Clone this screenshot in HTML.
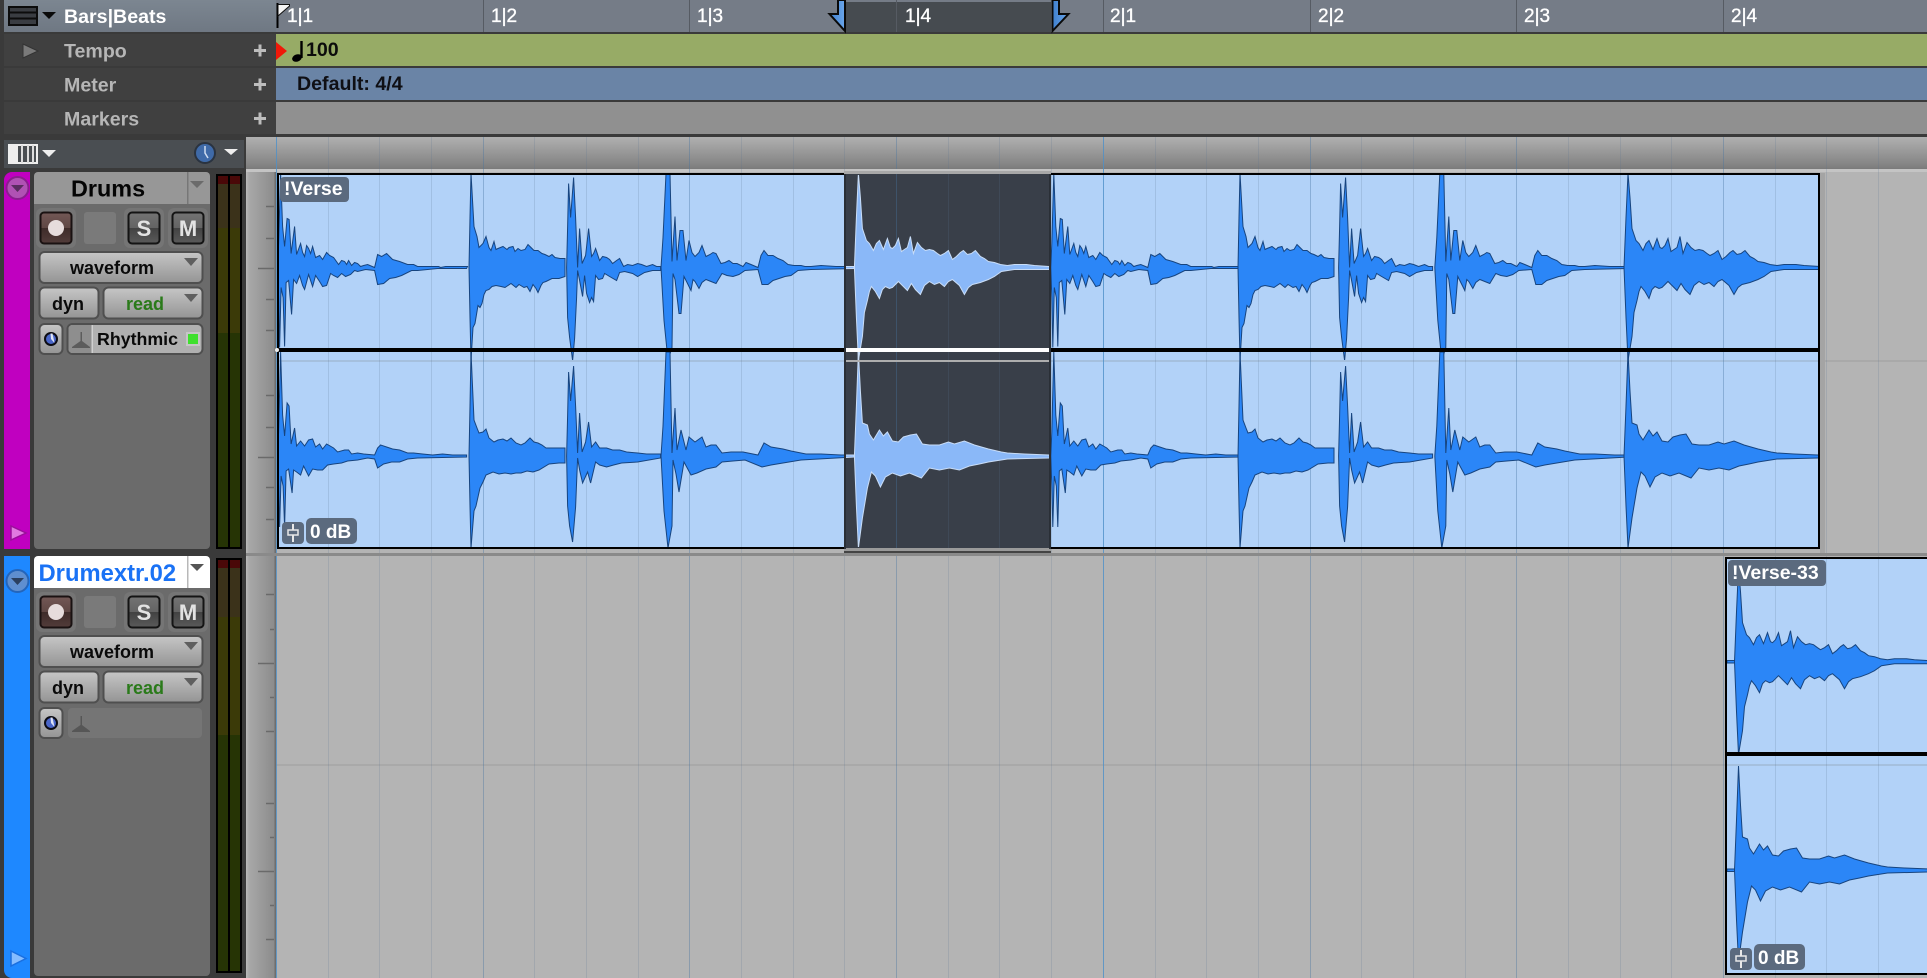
<!DOCTYPE html>
<html><head><meta charset="utf-8"><title>Bars|Beats</title>
<style>
html,body{margin:0;padding:0;background:#3a3a3a;width:1927px;height:978px;overflow:hidden}
svg{display:block;position:absolute;left:0;top:0}
text{font-family:"Liberation Sans",sans-serif;font-weight:bold}
.w{fill:#2b86f7;stroke:#17447e;stroke-width:1}
.s{fill:#8ab8f8;stroke:#c9ddf7;stroke-width:1}
</style></head><body>
<svg width="1927" height="978" viewBox="0 0 1927 978" xmlns="http://www.w3.org/2000/svg">
<defs>
<linearGradient id="gStrip" x1="0" y1="0" x2="0" y2="1"><stop offset="0" stop-color="#b0b0b0"/><stop offset=".85" stop-color="#858585"/><stop offset="1" stop-color="#7a7a7a"/></linearGradient>
<linearGradient id="gVR" x1="0" y1="0" x2="1" y2="0"><stop offset="0" stop-color="#bababa"/><stop offset=".1" stop-color="#a8a8a8"/><stop offset="1" stop-color="#8a8a8a"/></linearGradient>
<linearGradient id="gHead" x1="0" y1="0" x2="0" y2="1"><stop offset="0" stop-color="#7c8691"/><stop offset="1" stop-color="#6f7883"/></linearGradient>
<linearGradient id="gBtn" x1="0" y1="0" x2="0" y2="1"><stop offset="0" stop-color="#c6c6c6"/><stop offset="1" stop-color="#949494"/></linearGradient>
<linearGradient id="gRec" x1="0" y1="0" x2="0" y2="1"><stop offset="0" stop-color="#735856"/><stop offset=".5" stop-color="#5f4744"/><stop offset=".5" stop-color="#3e2b29"/><stop offset="1" stop-color="#523c3a"/></linearGradient>
<linearGradient id="gSM" x1="0" y1="0" x2="0" y2="1"><stop offset="0" stop-color="#737373"/><stop offset=".5" stop-color="#646464"/><stop offset=".5" stop-color="#424242"/><stop offset="1" stop-color="#5a5a5a"/></linearGradient>
<linearGradient id="gFlag" x1="0" y1="0" x2="1" y2="0"><stop offset="0" stop-color="#3f80cf"/><stop offset="1" stop-color="#6ba6ea"/></linearGradient>

<clipPath id="c1"><path d="M279 175H845V360H279zM1050 175H1818V360H1050z"/></clipPath>
<clipPath id="c2"><path d="M279 352H845V547H279zM1050 352H1818V547H1050z"/></clipPath>
<clipPath id="s1"><rect x="846" y="175" width="203" height="185"/></clipPath>
<clipPath id="s2"><rect x="846" y="352" width="203" height="195"/></clipPath>
<clipPath id="t1"><rect x="1727" y="559" width="200" height="205"/></clipPath>
<clipPath id="t2"><rect x="1727" y="756" width="200" height="217"/></clipPath>

<path id="a1" d="M0 0L1 -24 3 -94 5 -41 7 -21 9.5 -49 11.5 -48 13.5 -14 17 -41 19 -13 23 -24 25 -15 27 -11 29 -22 31 -19 33 -14 35 -21 38 -10 42 -12 45 -8 49 -15 52 -12 56 -10 61 -3 64 -7 67 -6 69 -3 71 -7 74 -2 77 -5 80 -4 83 -1 86 -2 90 -3 97 0 100 -13 104 -11 109 -14 115 -8 122 -6 130 -3 136 -3 140 -1 161 -1 163 0 168 -1 190 -1V0M0 0L1 30 2 80 3.5 20 5.5 30 7 79 8.5 15 11 13 14 47 16 12 19 16 22 8 25 18 27 22 31 7 35 19 38 8 42 14 45 19 49 18 53 6 56 8 60 10 64 6 68 9 73 7 77 3 80 4 88 2 97 3 100 17 106 16 112 11 118 10 124 8 128 6 134 3 140 3 160 1 189 1V0"/>
<path id="b1" d="M0 0L1 -50 2 -94 5 -41 8 -31 10 -20 14 -24 17 -31 20 -20 22 -17 25 -26 27 -18 29 -19 34 -21 38 -18 40 -20 44 -21 46 -16 49 -19 52 -17 56 -18 59 -23 62 -20 65 -17 69 -17 73 -14 76 -13 80 -11 83 -13 86 -10 91 -9 96 -9V0M0 0L1 50 2 93 4 60 6 56 9 38 11 40 13 36 15 27 17 23 20 22 23 19 27 18 32 19 36 20 42 16 47 20 50 17 55 20 58 19 61 24 64 17 67 21 69 25 72 18 74 15 77 14 83 11 90 11 96 9V0"/>
<path id="c1w" d="M0 0L1 -40 2 -84 4 -50 7 -90 9 -50 11 0 13 -39 15.500 -4 19 -12 22 -39 25 -11 27 -14 29 -19 33 -7 36 -11 40 -10 43 -8 46 -4 50 -7 53 -9 55 -5 57 -1 61 -3 66 -2 71 -4 75 -3 80 -1 86 -3 90 -1 94 -1V0M0 0L1 50 3 70 6 93 8 71 10 30 11 3 13 13 16 29 18 8 20 26 23 35 25 30 27 34 29 8 32 12 36 11 38 6 43 9 50 13 53 5 58 4 66 6 71 9 78 5 86 3 94 3V0"/>
<path id="d1" d="M0 0L2 -30 5 -94 9 -94 11 -6 14 -51 16 -7 19 -37 22 -37 25 -7 28 -27 31 -15 34 -11 38 -15 41 -22 45 -11 49 -13 52 -15 55 -14 60 -4 64 -5 68 -7 72 -4 76 -4 82 -1 85 -5 90 -3 97 0 100 -12 103 -17 107 -12 112 -12 117 -9 122 -7 127 -3 133 -2 140 -2 144 -1 150 -1 160 -2 175 -1 193 -1V0M0 0L3 53 7 93 11 80 12 6 14 12 18 46 20 46 23 9 26 15 30 23 32 12 34 14 38 21 41 15 45 12 50 14 55 16 61 6 66 8 72 9 78 7 84 3 97 2 101 17 107 17 112 13 118 11 124 9 130 8 137 3 150 2 193 1V0"/>
<path id="e1" d="M0 0L2 -50 4 -94 6 -70 8 -39 10 -33 12 -27 15 -24 19 -17 22 -24 25 -27 29 -18 33 -29 36 -20 38 -19 41 -22 44 -29 47 -16 50 -18 53 -20 56 -31 59 -14 63 -25 67 -20 71 -17 75 -18 79 -17 83 -14 86 -12 90 -14 94 -17 98 -8 102 -11 106 -15 109 -17 113 -13 117 -14 121 -17 126 -11 130 -9 134 -6 140 -5 146 -3 153 -2 160 -3 172 -3 180 -2 195 -1V0M0 0L2 50 4 93 8 69 10 45 13 33 15 24 17 19 21 24 25 31 28 22 31 19 35 21 38 20 41 17 44 14 48 18 53 23 57 16 61 22 66 27 70 18 75 14 80 17 85 15 90 19 94 14 98 12 105 18 110 27 114 20 118 17 126 15 134 12 140 9 147 4 160 2 195 2V0"/>

<path id="a2" d="M0 0L1 -24 3 -104 5 -41 7 -20 9.500 -53 11.500 -50 13.500 -12 17 -28 19 -10 23 -15 27 -10 31 -16 35 -17 38 -9 42 -12 45 -7 49 -12 56 -8 60 -4 67 -6 71 -6 74 -2 80 -3 86 -2 97 -1 100 -8 103 -11 109 -9 115 -7 122 -6 130 -3 136 -3 145 -2 155 -1 165 -2 175 -1 189 -1V0M0 0L1 30 2 71 3.500 20 5.500 30 7 71 8.500 15 11 13 14.500 37 16 14 19 16 23 19 26 10 31 20 35 13 40 14 45 14 50 9 56 8 64 7 70 5 80 4 90 2 97 3 100 12 106 8 114 6 122 6 130 3 140 2 189 1V0"/>
<path id="b2" d="M0 0L1 -50 2 -104 5 -36 8 -28 10 -23 14 -24 17 -27 20 -18 25 -14 29 -16 34 -17 38 -15 42 -18 47 -13 52 -11 56 -13 61 -18 65 -14 69 -13 73 -11 77 -8 85 -8 96 -8V0M0 0L1 50 2 92 5 55 7 50 11 32 14 26 17 19 24 16 30 18 36 17 42 18 47 17 52 17 58 15 64 16 70 14 80 8 90 7 96 7V0"/>
<path id="c2w" d="M0 0L1 -40 2 -84 4 -55 7 -90 9 -50 11 -3 13 -43 15.500 -4 19 -14 22 -34 25 -9 29 -14 33 -8 37 -8 40 -8 46 -6 53 -6 60 -4 71 -3 80 -2 94 -2V0M0 0L1 50 3 70 6 86 9 51 11 2 13 14 16 27 21 16 24 27 29 6 33 9 40 11 47 9 55 7 71 6 94 2V0"/>
<path id="d2" d="M0 0L2 -30 5 -104 9 -104 11 -3 14 -48 16 -6 20 -26 25 -6 28 -19 34 -14 41 -19 45 -9 50 -11 55 -11 61 -3 70 -4 82 -4 97 -1 103 -13 110 -9 122 -7 130 -5 145 -2 160 -2 180 -1 193 -1V0M0 0L3 55 7 92 11 70 12 4 15 18 18 36 23 6 30 19 36 17 45 13 55 11 61 6 72 5 84 4 101 11 110 9 122 7 140 4 193 1V0"/>
<path id="e2" d="M0 0L2 -50 4 -104 6 -65 8 -33 13 -31 15 -22 19 -16 25 -26 29 -20 33 -24 38 -15 44 -14 49 -19 56 -21 62 -22 68 -12 75 -11 85 -11 94 -14 100 -12 110 -15 120 -11 134 -7 147 -4 153 -3 170 -2 195 -1V0M0 0L2 50 4 92 8 62 13 32 17 16 21 20 26 31 31 21 38 17 46 20 55 17 67 22 75 12 85 14 95 12 105 14 115 10 125 8 134 6 153 3 195 2V0"/>

<g id="w1">
<use href="#a1" x="277.6" y="267.5"/><use href="#b1" x="469" y="267.5"/><use href="#c1w" x="566.6" y="267.5"/><use href="#d1" x="661" y="267.5"/><use href="#e1" x="854.4" y="267.5"/>
<use href="#a1" x="1050.8" y="267.5"/><use href="#b1" x="1238" y="267.5"/><use href="#c1w" x="1338.6" y="267.5"/><use href="#d1" x="1434.8" y="267.5"/><use href="#e1" x="1624" y="267.5"/>
</g>
<g id="w2">
<use href="#a2" x="277.6" y="456"/><use href="#b2" x="469" y="456"/><use href="#c2w" x="566.6" y="456"/><use href="#d2" x="661" y="456"/><use href="#e2" x="854.4" y="456"/>
<use href="#a2" x="1050.8" y="456"/><use href="#b2" x="1238" y="456"/><use href="#c2w" x="1338.6" y="456"/><use href="#d2" x="1434.8" y="456"/><use href="#e2" x="1624" y="456"/>
</g>

<g id="trk">
<rect x="36" y="208" width="40" height="40" rx="6" fill="#757575"/>
<rect x="40.5" y="212.5" width="31" height="31" rx="3.5" fill="url(#gRec)" stroke="#1a1212" stroke-width="2"/>
<circle cx="56" cy="228" r="8" fill="#e6dcdc"/>
<rect x="84" y="212" width="32" height="32" rx="3" fill="#7a7a7a"/>
<rect x="124" y="208" width="40" height="40" rx="6" fill="#757575"/>
<rect x="128.5" y="212.5" width="31" height="31" rx="3.5" fill="url(#gSM)" stroke="#141414" stroke-width="2"/>
<rect x="168" y="208" width="40" height="40" rx="6" fill="#757575"/>
<rect x="172.5" y="212.5" width="31" height="31" rx="3.5" fill="url(#gSM)" stroke="#141414" stroke-width="2"/>
<rect x="39.5" y="252" width="163" height="31" rx="5" fill="url(#gBtn)" stroke="#4f4f4f" stroke-width="2"/>
<path d="M184 258h14l-7 8z" fill="#5f5f5f"/>
<rect x="39.5" y="287.500" width="59" height="31" rx="5" fill="url(#gBtn)" stroke="#4f4f4f" stroke-width="2"/>
<rect x="103.500" y="287.500" width="99" height="31" rx="5" fill="url(#gBtn)" stroke="#4f4f4f" stroke-width="2"/>
<path d="M184 294h14l-7 8z" fill="#5f5f5f"/>
<rect x="39.500" y="324" width="23" height="30" rx="5" fill="url(#gBtn)" stroke="#4f4f4f" stroke-width="2"/>
<circle cx="51" cy="339" r="6" fill="#4a66c8" stroke="#0c0c14" stroke-width="2"/>
<path d="M51 339L50.500 333.500H52.500L54.500 343z" fill="#dfe4f5"/>
</g>
<path id="metro" d="M80.500 332h1.500v9l8 6v1H72v-1l8.500-6z"/>
<path id="tick" d="M266 206.500h8M266 238.500h8M258 268.500h16M266 299.500h8M266 330.500h8M266 395.500h8M266 427.500h8M258 457.500h16M266 487.500h8M266 519.500h8"/>
</defs>

<!-- base -->
<rect width="1927" height="978" fill="#3a3a3a"/>

<!-- top rows -->
<rect x="4" y="0" width="272" height="32" fill="url(#gHead)"/>
<rect x="276" y="0" width="1651" height="32" fill="#757c87"/>
<rect x="4" y="34" width="272" height="32" fill="#404040"/>
<rect x="4" y="68" width="272" height="32" fill="#404040"/>
<rect x="4" y="102" width="272" height="32" fill="#404040"/>
<rect x="276" y="34" width="1651" height="32" fill="#97ab66"/>
<rect x="276" y="68" width="1651" height="32" fill="#6a84a6"/>
<rect x="276" y="102" width="1651" height="32" fill="#909090"/>
<rect x="4" y="140" width="240" height="28" fill="#4a4e52"/>

<!-- ruler selection + lines -->
<rect x="845" y="0" width="206" height="32" fill="#464b50"/>
<rect x="845" y="0" width="206" height="2" fill="#757c87"/>
<path d="M483.500 0v32M689.500 0v32M896.500 0v32M1103.500 0v32M1310.500 0v32M1516.500 0v32M1723.500 0v32" stroke="#565b63" stroke-width="1"/>

<!-- flag + selection markers -->
<path d="M277.500 3V28" stroke="#000" stroke-width="2"/>
<path d="M278 4.500H289.500V6L278 16z" fill="#f4f4f4" stroke="#111" stroke-width="1"/>
<path d="M838 0V14H829.500L845 31V0z" fill="url(#gFlag)" stroke="#0a0a0a" stroke-width="2"/>
<path d="M1059 0V14H1068.500L1052.500 31V0z" fill="url(#gFlag)" stroke="#0a0a0a" stroke-width="2"/>

<!-- header text -->
<g fill="none" stroke="#0c0c0c" stroke-width="2"><rect x="9" y="7" width="28" height="18" fill="#3a3d42"/></g>
<path d="M9 12.500h28M9 18.500h28" stroke="#0c0c0c" stroke-width="2"/>
<path d="M42 12h14l-7 7z" fill="#0a0a0a"/>
<text x="64" y="23" font-size="19.600" fill="#fff">Bars|Beats</text>
<path d="M23 44l15 7-15 7z" fill="#7a7a7a" stroke="#333" stroke-width="1"/>
<text x="64" y="57.500" font-size="19.600" fill="#b6b6b6">Tempo</text>
<text x="64" y="91.500" font-size="19.600" fill="#b6b6b6">Meter</text>
<text x="64" y="125.500" font-size="19.600" fill="#b6b6b6">Markers</text>
<path d="M260 44.500v12M254 50.500h12M260 78.500v12M254 84.500h12M260 112.500v12M254 118.500h12" stroke="#bdbdbd" stroke-width="3"/>

<g font-size="19" fill="#fff" style="font-weight:normal;stroke:#fff;stroke-width:.35px">
<text x="287" y="22" style="font-weight:normal">1|1</text>
<text x="491" y="22" style="font-weight:normal">1|2</text>
<text x="697" y="22" style="font-weight:normal">1|3</text>
<text x="905" y="22" style="font-weight:normal">1|4</text>
<text x="1110" y="22" style="font-weight:normal">2|1</text>
<text x="1318" y="22" style="font-weight:normal">2|2</text>
<text x="1524" y="22" style="font-weight:normal">2|3</text>
<text x="1731" y="22" style="font-weight:normal">2|4</text>
</g>

<!-- tempo / meter -->
<path d="M276 42L287 51 276 60z" fill="#f01808"/>
<path d="M301.500 41V58" stroke="#000" stroke-width="2.400"/>
<ellipse cx="297" cy="58" rx="5" ry="3.600" fill="#000" transform="rotate(-20 297 58)"/>
<text x="306" y="56" font-size="19.600" fill="#0c0c0c">100</text>
<text x="297" y="90" font-size="19.600" fill="#0f0f14">Default: 4/4</text>

<!-- strip -->
<rect x="246" y="137" width="1681" height="32" fill="url(#gStrip)"/>
<rect x="246" y="169" width="1681" height="3" fill="#c4c4c4"/>

<!-- view icons -->
<rect x="9" y="145" width="28" height="18" fill="#4a4e52" stroke="#eee" stroke-width="2"/>
<rect x="9" y="145" width="9" height="18" fill="#eee"/>
<path d="M22 145v18M28 145v18M33 145v18" stroke="#ddd" stroke-width="2"/>
<path d="M42 150h14l-7 7z" fill="#eee"/>
<circle cx="205" cy="153" r="10" fill="#3f6aa8" stroke="#2a3340" stroke-width="2"/>
<path d="M205 146v7l3 5" stroke="#cfdcf0" stroke-width="1.500" fill="none"/>
<path d="M224 149h14l-7 6z" fill="#eee"/>

<!-- vertical ruler -->
<rect x="246" y="172" width="30" height="381" fill="url(#gVR)"/>
<rect x="246" y="556" width="30" height="422" fill="url(#gVR)"/>
<rect x="274.500" y="172" width="1.500" height="806" fill="#6e6e6e"/>
<rect x="246" y="553" width="1681" height="3" fill="#8a8a8a"/>
<use href="#tick" stroke="#6a6a6a" stroke-width="1.500"/>
<path d="M266 594.500h8M270 629.500h4M258 663.500h16M270 697.500h4M266 731.500h8M266 803.500h8M270 837.500h4M258 871.500h16M270 905.500h4M266 939.500h8" stroke="#6a6a6a" stroke-width="1.500"/>

<!-- edit area -->
<rect x="276" y="172" width="1651" height="381" fill="#b4b4b4"/>
<rect x="276" y="556" width="1651" height="422" fill="#b4b4b4"/>
<rect x="276" y="360" width="1651" height="2" fill="#a9a9a9"/>
<rect x="276" y="764" width="1651" height="2" fill="#a9a9a9"/>

<!-- clip backgrounds -->
<rect x="277" y="173" width="1543" height="376" fill="#b2d2f8"/>
<rect x="1820" y="173" width="5" height="380" fill="#a4a4a4"/>
<rect x="845" y="173" width="205" height="376" fill="#393f49"/>
<rect x="1725" y="557" width="202" height="417" fill="#b2d2f8"/>
<rect x="277" y="360" width="1543" height="2" fill="#a5c0de"/>
<rect x="845" y="360" width="205" height="2" fill="#4a515c"/>
<rect x="1725" y="764" width="202" height="2" fill="#a5c0de"/>

<!-- grid verticals -->
<path d="M328.500 137V978M379.500 137V978M431.500 137V978M534.500 137V978M586.500 137V978M638.500 137V978M741.500 137V978M793.500 137V978M844.500 137V978M948.500 137V978M999.500 137V978M1051.500 137V978M1155.500 137V978M1206.500 137V978M1258.500 137V978M1361.500 137V978M1413.500 137V978M1465.500 137V978M1568.500 137V978M1620.500 137V978M1671.500 137V978M1775.500 137V978M1826.500 137V978M1878.500 137V978" stroke="rgb(90,115,145)" stroke-opacity=".2" stroke-width="1"/>
<path d="M483.500 137V978M689.500 137V978M896.500 137V978M1310.500 137V978M1516.500 137V978M1723.500 137V978" stroke="rgb(70,115,160)" stroke-opacity=".38" stroke-width="1"/>
<path d="M276.500 137V978M1103.500 137V978" stroke="#4d90c8" stroke-opacity=".8" stroke-width="1"/>
<rect x="246" y="553" width="1681" height="3" fill="#8a8a8a"/>
<rect x="845" y="169" width="205" height="3" fill="#c4c4c4"/>

<!-- waveforms -->
<g class="w"><use href="#w1" clip-path="url(#c1)"/><use href="#w2" clip-path="url(#c2)"/></g>
<g class="s"><use href="#w1" clip-path="url(#s1)"/><use href="#w2" clip-path="url(#s2)"/></g>
<g class="w">
<g clip-path="url(#t1)"><path d="M1727 660.500h8v2.500h-8z"/><use href="#e1" x="1734.500" y="661.700"/></g>
<g clip-path="url(#t2)"><path d="M1727 869h8v2.500h-8z"/><use href="#e2" x="1734.500" y="870"/></g>
</g>

<!-- clip frames -->
<path d="M845 174H278V548H845M1050 174H1819V548H1050" fill="none" stroke="#000" stroke-width="2"/>
<rect x="277" y="348" width="568" height="4" fill="#000"/>
<rect x="1050" y="348" width="770" height="4" fill="#000"/>
<rect x="845" y="348" width="205" height="4" fill="#fff"/>
<rect x="845" y="360" width="205" height="2" fill="#aeaeae"/>
<rect x="844" y="171" width="207" height="3" fill="#a8a8a8"/>
<rect x="844" y="548" width="207" height="3" fill="#9a9a9a"/>
<rect x="844" y="551" width="207" height="2" fill="#444"/>
<rect x="844" y="174" width="2" height="375" fill="#2a2f36"/>
<rect x="1049" y="174" width="2" height="375" fill="#2a2f36"/>
<circle cx="277" cy="350" r="2" fill="#eee"/>
<path d="M1726 975V558H1927M1726 974H1927" fill="none" stroke="#000" stroke-width="2"/>
<rect x="1725" y="752" width="202" height="4" fill="#000"/>

<!-- clip labels -->
<rect x="280" y="177" width="69" height="25" rx="4" fill="#5b6a7e"/>
<text x="284" y="195" font-size="19.500" fill="#fff">!Verse</text>
<rect x="282" y="522" width="22" height="22" rx="4" fill="#5b6a7e"/>
<path d="M293 524v18" stroke="#e8e8e8" stroke-width="2"/>
<rect x="288" y="530" width="10" height="5" fill="#5b6a7e" stroke="#e8e8e8" stroke-width="1.500"/>
<rect x="306" y="518" width="51" height="26" rx="5" fill="#5b6a7e"/>
<text x="310" y="538" font-size="19" fill="#fff">0 dB</text>
<rect x="1728" y="560" width="98" height="26" rx="4" fill="#5b6a7e"/>
<text x="1732" y="579" font-size="19.500" fill="#fff">!Verse-33</text>
<rect x="1730" y="948" width="22" height="22" rx="4" fill="#5b6a7e"/>
<path d="M1741 950v18" stroke="#e8e8e8" stroke-width="2"/>
<rect x="1736" y="956" width="10" height="5" fill="#5b6a7e" stroke="#e8e8e8" stroke-width="1.500"/>
<rect x="1754" y="944" width="51" height="26" rx="5" fill="#5b6a7e"/>
<text x="1758" y="964" font-size="19" fill="#fff">0 dB</text>

<!-- track strips -->
<path d="M4 180a8 8 0 0 1 8-8H30V549H4z" fill="#c000c0"/>
<path d="M4 556H30V978H12a8 8 0 0 1-8-8z" fill="#1e88ff"/>
<circle cx="17.500" cy="188" r="11" fill="#b052b4" stroke="#8a1e8e" stroke-width="2"/>
<path d="M11 185h13l-6.500 7z" fill="#5a2c60"/>
<circle cx="17.500" cy="581" r="11" fill="#5f8fd0" stroke="#2465ba" stroke-width="2"/>
<path d="M11 578h13l-6.500 7z" fill="#2b4060"/>
<path d="M11 526l15 7-15 7z" fill="#e07ae0" stroke="#9a109a" stroke-width="1.500"/>
<path d="M11 951l15 7.500-15 7.500z" fill="#85bcff" stroke="#1a6fe0" stroke-width="1.500"/>

<!-- track panels -->
<path d="M34 204H210V545a4 4 0 0 1-4 4H38a4 4 0 0 1-4-4z" fill="#6b6b6b"/>
<path d="M34 588H210V972a4 4 0 0 1-4 4H38a4 4 0 0 1-4-4z" fill="#6b6b6b"/>
<path d="M38 172H206a4 4 0 0 1 4 4V204H34V176a4 4 0 0 1 4-4z" fill="#979797"/>
<rect x="187" y="172" width="1.500" height="32" fill="#777"/>
<path d="M190 181h14l-7 7z" fill="#6b6b6b"/>
<text x="71" y="196.500" font-size="23.400" fill="#050505">Drums</text>
<path d="M38 556H206a4 4 0 0 1 4 4V588H34V560a4 4 0 0 1 4-4z" fill="#fff"/>
<rect x="187" y="556" width="1.500" height="32" fill="#b8b8b8"/>
<path d="M190 564h14l-7 7z" fill="#555"/>
<text x="38.500" y="581" font-size="23.800" fill="#1a72f5">Drumextr.02</text>

<use href="#trk"/>
<use href="#trk" y="384"/>

<g font-size="22" fill="#e2e2e2" text-anchor="middle">
<text x="144" y="236">S</text><text x="188" y="236">M</text>
<text x="144" y="620">S</text><text x="188" y="620">M</text>
</g>
<g font-size="18" fill="#0a0a0a" text-anchor="middle">
<text x="112" y="274">waveform</text>
<text x="68" y="310">dyn</text>
<text x="112" y="658">waveform</text>
<text x="68" y="694">dyn</text>
</g>
<g font-size="18" fill="#2a7a1a" text-anchor="middle">
<text x="145" y="310">read</text>
<text x="145" y="694">read</text>
</g>

<!-- row 3 track 1 -->
<rect x="67.500" y="324" width="135" height="30" rx="5" fill="#b0b0b0" stroke="#4f4f4f" stroke-width="2"/>
<path d="M72.500 325H91.500V353H72.500a4 4 0 0 1-4-4V329a4 4 0 0 1 4-4z" fill="#8e8e8e"/>
<rect x="91.500" y="325" width="1.500" height="28" fill="#d0d0d0"/>
<use href="#metro" fill="#5c5c5c"/>
<text x="97" y="345" font-size="17.800" fill="#0a0a0a">Rhythmic</text>
<rect x="186" y="332" width="14" height="14" fill="#c6c6c6"/>
<rect x="188" y="334" width="10" height="10" fill="#3fe02e"/>

<!-- row 3 track 2 -->
<rect x="68" y="708" width="134" height="30" rx="4" fill="#757575"/>
<use href="#metro" y="384" fill="#565656"/>

<!-- meters -->
<g>
<rect x="216" y="174" width="26" height="375" fill="#000"/>
<rect x="218" y="176" width="10" height="8" fill="#4a0808"/><rect x="230" y="176" width="10" height="8" fill="#4a0808"/>
<rect x="218" y="184" width="10" height="44" fill="#3b321a"/><rect x="230" y="184" width="10" height="44" fill="#3b321a"/>
<rect x="218" y="228" width="10" height="105" fill="#3b3a08"/><rect x="230" y="228" width="10" height="105" fill="#3b3a08"/>
<rect x="218" y="333" width="10" height="214" fill="#263405"/><rect x="230" y="333" width="10" height="214" fill="#263405"/>
<rect x="216" y="558" width="26" height="415" fill="#000"/>
<rect x="218" y="560" width="10" height="8" fill="#4a0808"/><rect x="230" y="560" width="10" height="8" fill="#4a0808"/>
<rect x="218" y="568" width="10" height="49" fill="#3b321a"/><rect x="230" y="568" width="10" height="49" fill="#3b321a"/>
<rect x="218" y="617" width="10" height="118" fill="#3b3a08"/><rect x="230" y="617" width="10" height="118" fill="#3b3a08"/>
<rect x="218" y="735" width="10" height="236" fill="#263405"/><rect x="230" y="735" width="10" height="236" fill="#263405"/>
</g>
</svg>
</body></html>
